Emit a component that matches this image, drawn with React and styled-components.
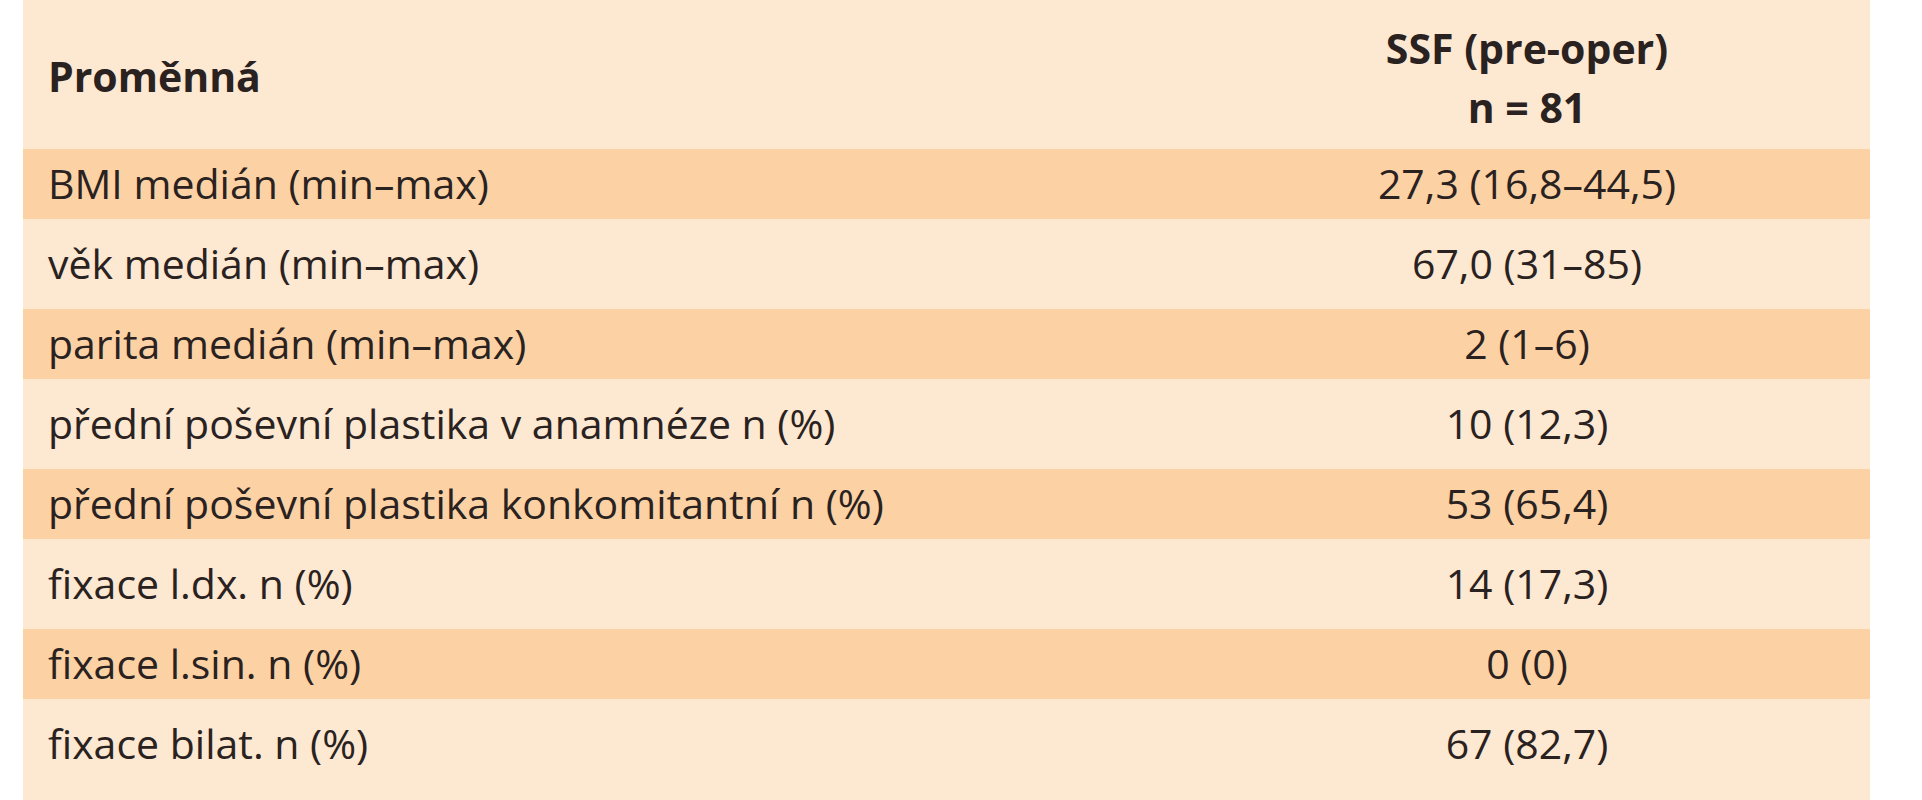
import React from 'react'
import styled, { createGlobalStyle } from 'styled-components'

const LIGHT = '#fde8d2'
const DARK = '#fcd2a5'
const INK = '#2a2220'

const GlobalStyle = createGlobalStyle`
  body {
    margin: 0;
    background: #fff;
    font-family: "Open Sans", "Liberation Sans", sans-serif;
    color: ${INK};
  }
`

const Page = styled.div`
  padding-left: 23px;
  height: 100vh;
  overflow: hidden;
`

const Panel = styled.div`
  width: 1847px;
  min-height: 100vh;
  background: ${LIGHT};
`

const Table = styled.table`
  width: 100%;
  border-collapse: collapse;
  font-size: 41px;
  line-height: 1.2;
`

const HeadCell = styled.th`
  height: 143px;
  padding: ${p => (p.$center ? '6px 0 0' : '4px 25px 0')};
  font-weight: 700;
  text-align: ${p => (p.$center ? 'center' : 'left')};
  vertical-align: middle;
  width: ${p => (p.$center ? '686px' : 'auto')};
`

const HeadLine = styled.div`
  line-height: 59px;
`

const Row = styled.tr`
  height: ${p => (p.$dark ? '70px' : '90px')};
  background: ${p => (p.$dark ? DARK : LIGHT)};
`

const Cell = styled.td`
  padding: ${p => (p.$center ? '0' : '0 25px')};
  vertical-align: middle;
  text-align: ${p => (p.$center ? 'center' : 'left')};
  white-space: nowrap;
`

const rows = [
  ['BMI medián (min–max)', '27,3 (16,8–44,5)'],
  ['věk medián (min–max)', '67,0 (31–85)'],
  ['parita medián (min–max)', '2 (1–6)'],
  ['přední poševní plastika v anamnéze n (%)', '10 (12,3)'],
  ['přední poševní plastika konkomitantní n (%)', '53 (65,4)'],
  ['fixace l.dx. n (%)', '14 (17,3)'],
  ['fixace l.sin. n (%)', '0 (0)'],
  ['fixace bilat. n (%)', '67 (82,7)']
]

const App = () => (
  <Page>
    <GlobalStyle />
    <Panel>
      <Table>
        <thead>
          <tr>
            <HeadCell>Proměnná</HeadCell>
            <HeadCell $center>
              <HeadLine>SSF (pre-oper)</HeadLine>
              <HeadLine>n = 81</HeadLine>
            </HeadCell>
          </tr>
        </thead>
        <tbody>
          {rows.map(([label, value], i) => (
            <Row key={label} $dark={i % 2 === 0}>
              <Cell>{label}</Cell>
              <Cell $center>{value}</Cell>
            </Row>
          ))}
        </tbody>
      </Table>
    </Panel>
  </Page>
)

export default App
